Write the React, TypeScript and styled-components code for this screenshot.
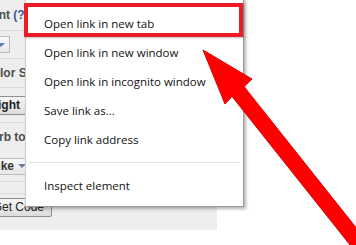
import React from 'react';
import styled, { createGlobalStyle } from 'styled-components';

const GlobalStyle = createGlobalStyle`
  html, body {
    margin: 0;
    padding: 0;
    background: #ffffff;
  }
`;

const Page = styled.div`
  position: relative;
  width: 356px;
  height: 245px;
  overflow: hidden;
  background: #ffffff;
  font-family: 'Liberation Sans', Arial, sans-serif;
`;

const Panel = styled.div`
  width: 217px;
  height: 230px;
  background: #eeeeee;
  display: flex;
  flex-direction: column;
  overflow: hidden;
`;

const Row = styled.div<{ h: number; line?: boolean }>`
  height: ${(p) => p.h}px;
  flex-shrink: 0;
  display: flex;
  align-items: center;
  border-bottom: ${(p) => (p.line ? '1px solid #dadada' : 'none')};
  box-sizing: border-box;
`;

/* labels are cut where the context menu covers them */
const Label = styled.span<{ shift: number }>`
  margin-left: ${(p) => -p.shift}px;
  width: ${(p) => p.shift + 25}px;
  flex-shrink: 0;
  overflow: hidden;
  font-weight: bold;
  font-size: 12px;
  color: #4e4e4e;
  white-space: nowrap;
`;

const Help = styled.span`
  color: #3b5998;
`;

const Select = styled.div<{ shift: number; w: number }>`
  margin-left: ${(p) => -p.shift}px;
  width: ${(p) => p.w}px;
  height: 17px;
  flex-shrink: 0;
  display: flex;
  align-items: center;
  justify-content: space-between;
  padding: 0 4px;
  box-sizing: border-box;
  border: 1px solid #bdbdbd;
  background: linear-gradient(#fafafa, #e6e6e6);
  font-size: 12px;
  font-weight: bold;
  color: #333;
`;

const Caret = styled.span<{ tone: string }>`
  width: 0;
  height: 0;
  border-left: 4px solid transparent;
  border-right: 4px solid transparent;
  border-top: 4px solid ${(p) => p.tone};
`;

const Button = styled.div<{ shift: number; w: number; bold?: boolean }>`
  margin-left: ${(p) => -p.shift}px;
  width: ${(p) => p.w}px;
  height: 19px;
  flex-shrink: 0;
  display: flex;
  align-items: center;
  justify-content: flex-end;
  padding-right: 7px;
  box-sizing: border-box;
  border: 1px solid #8e8e8e;
  border-radius: 2px;
  background: linear-gradient(#f6f6f6, #dcdcdc);
  font-size: 12px;
  font-weight: ${(p) => (p.bold ? 'bold' : 'normal')};
  color: #222;
  white-space: nowrap;
`;

const Menu = styled.div`
  position: absolute;
  left: 25px;
  top: -2px;
  width: 219px;
  padding: 10px 0 6px;
  box-sizing: border-box;
  background: #ffffff;
  border: 1px solid #9a9a9a;
  border-left-color: #cfcfcf;
  box-shadow: 2px 2px 3px rgba(0, 0, 0, 0.3);
  font-family: 'Open Sans', 'Liberation Sans', sans-serif;
  font-size: 11.5px;
  color: #111;
`;

const Item = styled.div`
  height: 29px;
  display: flex;
  align-items: center;
  padding-left: 18px;
  white-space: nowrap;
`;

const Separator = styled.div`
  height: 1px;
  margin: 8px 3px;
  background: #e2e2e2;
`;

const Highlight = styled.div`
  position: absolute;
  left: 24px;
  top: 3px;
  width: 219px;
  height: 34px;
  box-sizing: border-box;
  border: 4px solid #ec1c24;
  box-shadow: 1px 1px 2px rgba(0, 0, 0, 0.25);
`;

const Pointer = styled.svg`
  position: absolute;
  left: 0;
  top: 0;
  pointer-events: none;
`;

const items = [
  'Open link in new tab',
  'Open link in new window',
  'Open link in incognito window',
  'Save link as...',
  'Copy link address',
];

export default function App() {
  return (
    <>
      <GlobalStyle />
      <Page>
        <Panel>
          <Row h={31} line>
            <Label shift={16}>
              Font <Help>(?)</Help>
            </Label>
          </Row>
          <Row h={28} line>
            <Select shift={70} w={80}>
              <span>Arial</span>
              <Caret tone="#5a7fbf" />
            </Select>
          </Row>
          <Row h={29} line>
            <Label shift={16}>Color Scheme</Label>
          </Row>
          <Row h={35} line>
            <Button shift={20} w={48} bold>
              Light
            </Button>
          </Row>
          <Row h={28}>
            <Label shift={15}>Verb to display</Label>
          </Row>
          <Row h={31} line>
            <Select shift={15} w={46}>
              <span>Like</span>
              <Caret tone="#6a7f99" />
            </Select>
          </Row>
          <Row h={12} line />
          <Row h={26}>
            <Button shift={16} w={68}>
              Get Code
            </Button>
          </Row>
        </Panel>

        <Menu>
          {items.map((t) => (
            <Item key={t}>{t}</Item>
          ))}
          <Separator />
          <Item>Inspect element</Item>
        </Menu>

        <Highlight />

        <Pointer width={356} height={245} viewBox="0 0 356 245">
          <polygon
            points="203,50 252,79 244,86.6 396.5,278.6 384.6,288.4 232,96.4 225,104"
            fill="#ff0000"
            stroke="#e00000"
            strokeWidth={1}
            strokeLinejoin="miter"
          />
        </Pointer>
      </Page>
    </>
  );
}
